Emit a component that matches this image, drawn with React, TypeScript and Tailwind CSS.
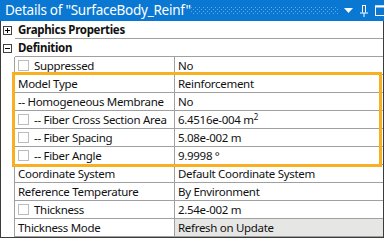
import type { ReactNode } from 'react';

type Row =
  | { kind: 'header'; label: string; open: boolean }
  | { kind: 'prop'; label: string; value: ReactNode; check?: boolean; gray?: boolean };

const TOP: Row[] = [
  { kind: 'header', label: 'Graphics Properties', open: false },
  { kind: 'header', label: 'Definition', open: true },
  { kind: 'prop', label: 'Suppressed', value: 'No', check: true },
];

const BOXED: Row[] = [
  { kind: 'prop', label: 'Model Type', value: 'Reinforcement' },
  { kind: 'prop', label: '-- Homogeneous Membrane', value: 'No' },
  {
    kind: 'prop',
    label: '-- Fiber Cross Section Area',
    value: (
      <>
        6.4516e-004 m<sup className="text-[8px]">2</sup>
      </>
    ),
    check: true,
  },
  { kind: 'prop', label: '-- Fiber Spacing', value: '5.08e-002 m', check: true },
  { kind: 'prop', label: '-- Fiber Angle', value: '9.9998 °', check: true },
];

const BOTTOM: Row[] = [
  { kind: 'prop', label: 'Coordinate System', value: 'Default Coordinate System' },
  { kind: 'prop', label: 'Reference Temperature', value: 'By Environment' },
  { kind: 'prop', label: 'Thickness', value: '2.54e-002 m', check: true },
  { kind: 'prop', label: 'Thickness Mode', value: 'Refresh on Update', gray: true },
];

function Toggle({ open }: { open: boolean }) {
  return (
    <svg width="9" height="9" viewBox="0 0 9 9" className="block">
      <rect x="0.5" y="0.5" width="8" height="8" fill="white" stroke="#404040" />
      <path d="M2 4.5h5" stroke="#000" />
      {!open && <path d="M4.5 2v5" stroke="#000" />}
    </svg>
  );
}

function Check() {
  return <span className="mr-[5px] h-[11px] w-[11px] shrink-0 border border-[#bcbcbc] bg-white" />;
}

function GridRow({ row }: { row: Row }) {
  if (row.kind === 'header') {
    return (
      <div className="flex h-[18px]">
        <div className="flex w-[14px] shrink-0 items-center pl-[2px]">
          <Toggle open={row.open} />
        </div>
        <div className="flex flex-1 items-center border-b border-[#a0a0a0] pl-[3px] font-bold">
          {row.label}
        </div>
      </div>
    );
  }
  return (
    <div className="flex h-[18px]">
      <div className="w-[14px] shrink-0 border-r border-[#a0a0a0]" />
      <div className="flex w-[160px] shrink-0 items-center border-r border-b border-[#a0a0a0] pl-[3px]">
        {row.check && <Check />}
        <span className="whitespace-nowrap">{row.label}</span>
      </div>
      <div
        className={
          'flex flex-1 items-center border-b border-[#a0a0a0] pl-[3px] whitespace-nowrap ' +
          (row.gray ? 'bg-[#e6e6e4]' : 'bg-white')
        }
      >
        <span>{row.value}</span>
      </div>
    </div>
  );
}

function TitleIcons() {
  return (
    <div className="flex items-center">
      <svg width="148" height="7" className="mr-[5px] block">
        <defs>
          <pattern id="dots" width="4" height="4" patternUnits="userSpaceOnUse">
            <rect x="0" y="0" width="1" height="1" fill="#5fa9e6" />
            <rect x="2" y="2" width="1" height="1" fill="#5fa9e6" />
          </pattern>
        </defs>
        <rect width="148" height="7" fill="url(#dots)" />
      </svg>
      <svg width="9" height="6" className="mr-[7px] block">
        <path d="M0 0h9L4.5 5z" fill="white" />
      </svg>
      <svg width="8" height="12" className="mr-[7px] block">
        <path d="M2 0.5h4M2.5 0.5v7M5.5 0.5v7M0 8h8M4 8v4" stroke="white" fill="none" />
      </svg>
      <svg width="11" height="11" className="mr-[6px] block">
        <rect x="0.5" y="1" width="10" height="9.5" fill="none" stroke="white" />
        <path d="M0 1.5h11" stroke="white" strokeWidth="2" />
      </svg>
      <svg width="10" height="10" className="block">
        <path d="M1 1l8 8M9 1l-8 8" stroke="white" strokeWidth="2" />
      </svg>
    </div>
  );
}

export default function App() {
  return (
    <div
      className="h-[240px] w-[386px] overflow-hidden bg-white text-[11.5px] leading-none tracking-[-0.3px] text-[#111]"
      style={{ fontFamily: '"Noto Sans", sans-serif' }}
    >
      <div className="flex h-[21px] w-[384px] items-center justify-between bg-[#0a78d2] pl-[5px] pr-[7px] text-white">
        <span className="text-[13.5px] tracking-[-0.25px] whitespace-nowrap">Details of "SurfaceBody_Reinf"</span>
        <TitleIcons />
      </div>
      <div className="w-[384px] border-x border-b border-[#3c3c3c]">
        {TOP.map((r) => (
          <GridRow key={r.label} row={r} />
        ))}
        <div className="relative">
          {BOXED.map((r) => (
            <GridRow key={r.label} row={r} />
          ))}
          <div className="pointer-events-none absolute top-[-3px] bottom-[-2px] left-[11px] right-[1px] border-[3px] border-[#f8b022]" />
        </div>
        {BOTTOM.map((r) => (
          <GridRow key={r.label} row={r} />
        ))}
      </div>
    </div>
  );
}
